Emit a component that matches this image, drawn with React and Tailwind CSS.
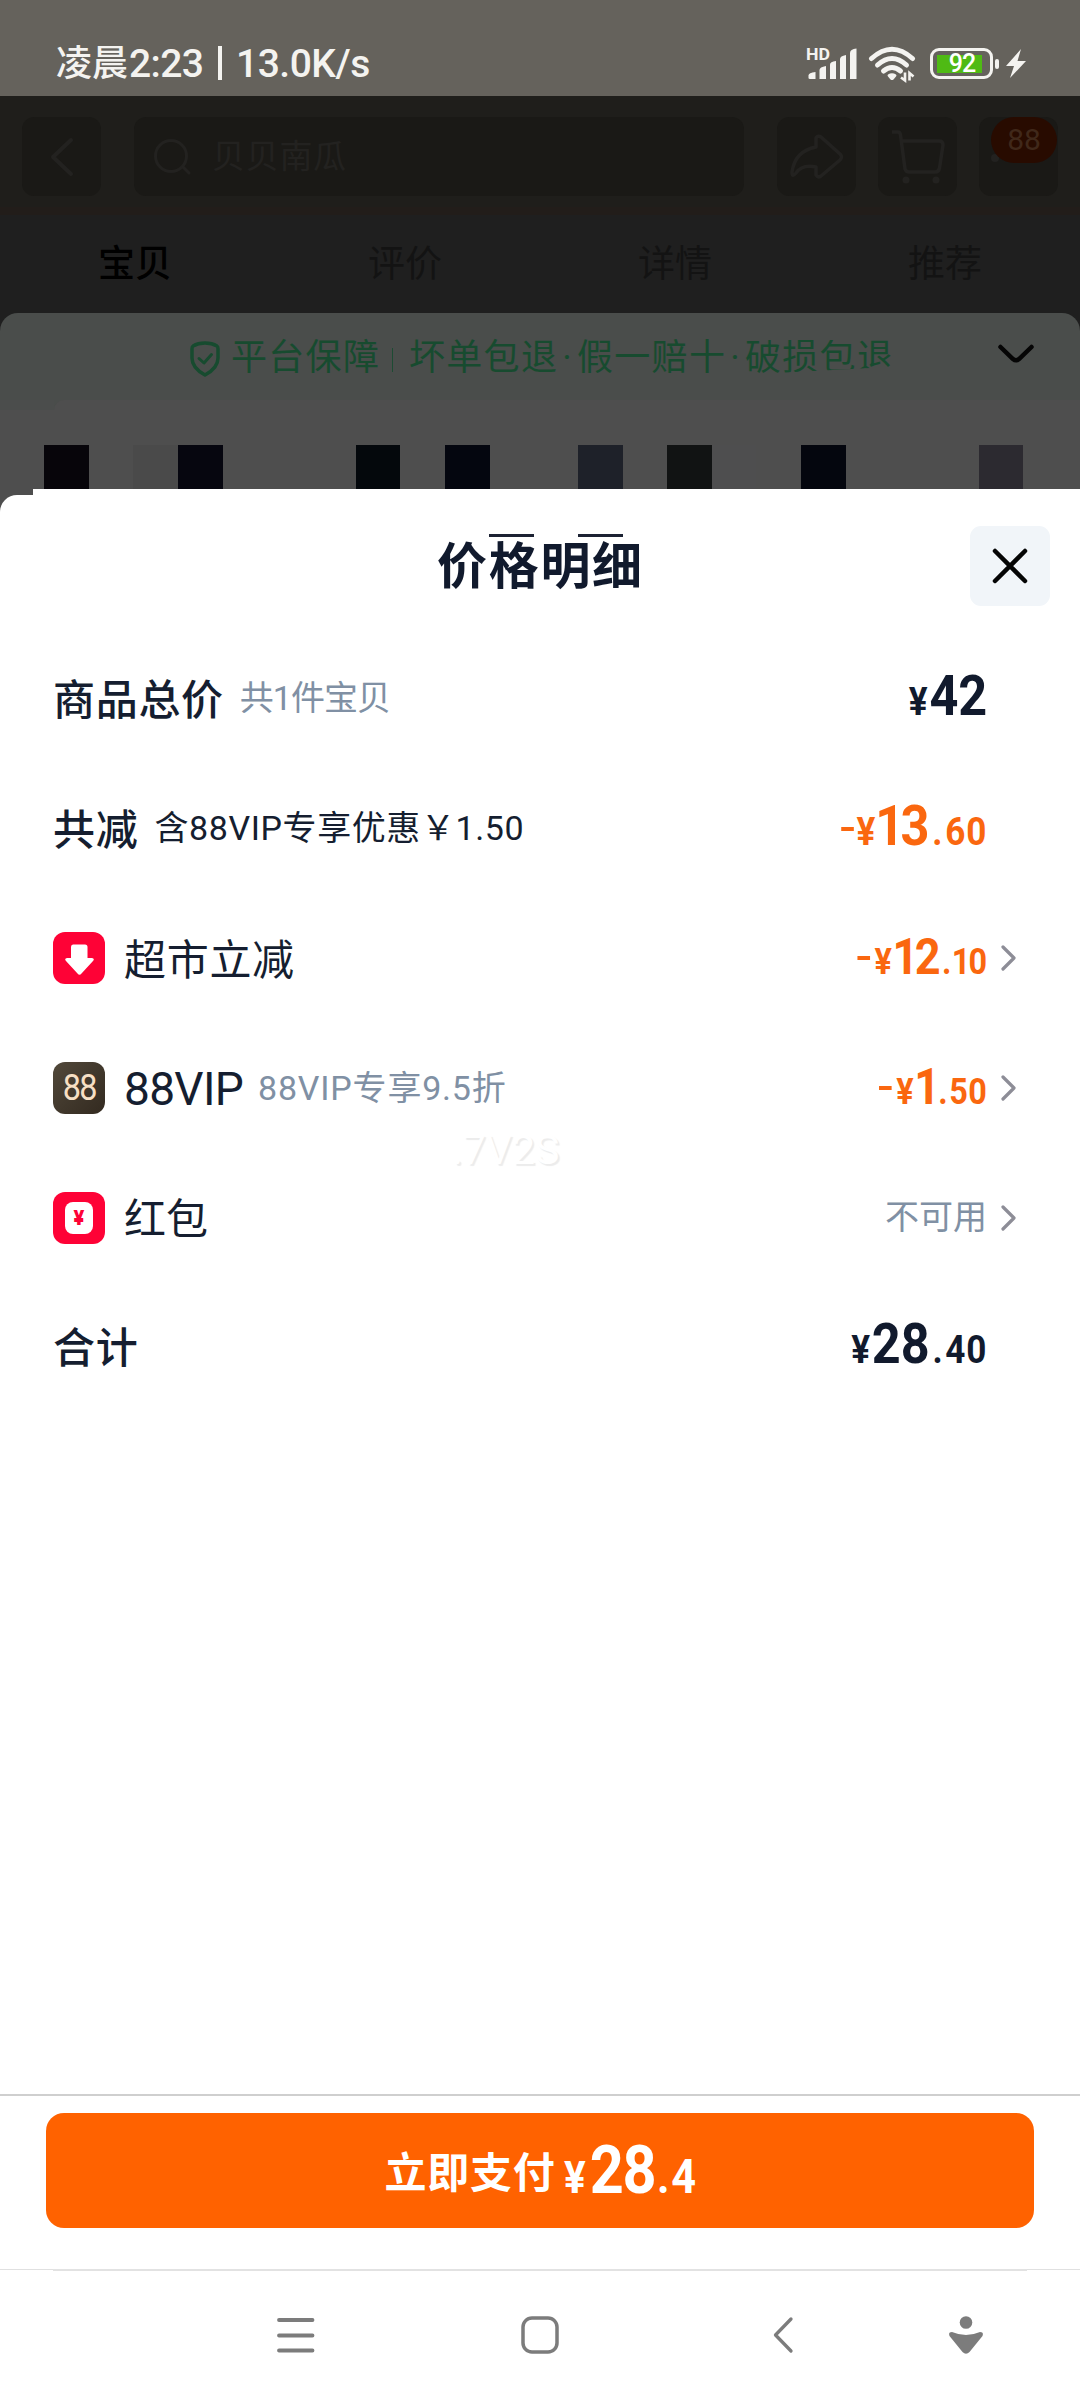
import clsx from 'clsx';

const PIXEL_BLOCKS = [
  { w: 'w-[44px]', color: '' },
  { w: 'w-[45px]', color: 'bg-[#07050a]' },
  { w: 'w-[44px]', color: '' },
  { w: 'w-[45px]', color: 'bg-[#4a4a4a]' },
  { w: 'w-[45px]', color: 'bg-[#06060f]' },
  { w: 'w-[133px]', color: '' },
  { w: 'w-[44px]', color: 'bg-[#04080c]' },
  { w: 'w-[45px]', color: '' },
  { w: 'w-[45px]', color: 'bg-[#04060f]' },
  { w: 'w-[88px]', color: '' },
  { w: 'w-[45px]', color: 'bg-[#1e2129]' },
  { w: 'w-[44px]', color: '' },
  { w: 'w-[45px]', color: 'bg-[#111313]' },
  { w: 'w-[44px]', color: 'bg-[#4e4e4f]' },
  { w: 'w-[45px]', color: '' },
  { w: 'w-[45px]', color: 'bg-[#04060e]' },
  { w: 'w-[133px]', color: '' },
  { w: 'w-[44px]', color: 'bg-[#2c2a30]' },
];

const tabs = ['宝贝', '评价', '详情', '推荐'];

const StatusBar = () => (
  <div className="flex h-24 items-start bg-[#65625c] pl-[56px] pt-[39px] text-[#f4f3f0]">
    <div className="flex h-12 w-[750px] items-center whitespace-nowrap pt-[2px] font-medium leading-none">
      <span className="w-[73px] text-[36px]">凌晨</span>
      <span className="w-[89px] text-[39px] tracking-[-0.6px]">2:23</span>
      <span className="mb-[3px] h-[34px] w-[4px] bg-[#f4f3f0]" />
      <span className="ml-[14px] text-[39px] tracking-[-0.5px]">13.0K/s</span>
    </div>
    <svg width="52" height="40" viewBox="0 0 52 40" className="mt-[5px]" fill="currentColor">
      <text x="0" y="15.500" fontSize="17" fontWeight="700" textLength="24" lengthAdjust="spacingAndGlyphs">HD</text>
      <path d="M2.500 34V31.500Q2.500 28.500 9.500 28V35H4Q2.500 35 2.500 34Z" />
      <path d="M13.500 26Q13.500 23 20 22V35H13.500Z" />
      <path d="M24 20.500Q24 17.500 30 17V35H24Z" />
      <path d="M34 15Q34 12 40 11V35H34Z" />
      <path d="M44 9Q44 5 50.500 4.500V35H44Z" />
    </svg>
    <svg width="50" height="40" viewBox="0 0 50 40" className="ml-[10px] mt-[5px]" fill="none" stroke="currentColor" strokeWidth="5">
      <path d="M3.500 14.500 Q24 -4 44.500 14.500" strokeLinecap="round" />
      <path d="M9.500 21 Q24 8 38.500 21" strokeLinecap="round" />
      <path d="M15.500 27 Q24 20 32.500 27" strokeLinecap="round" />
      <path d="M20 30.500 Q24 28 28 30.500 Q29 31.500 28 32.500 L25.500 35.500 Q24 36.500 22.500 35.500 L20 32.500 Q19 31.500 20 30.500Z" fill="currentColor" stroke="none" />
      <path d="M37 28.500V36.500L33 33.500M41.500 36.500V29L45.500 32.500" strokeWidth="2.600" />
    </svg>
    <div className="ml-[12px] mt-[9px] flex items-center">
      <div className="flex h-[31px] w-[63px] items-center rounded-[9px] border-[3px] border-[#f4f3f0] pl-[4px]">
        <div className="flex h-[18px] w-[45px] items-center justify-center bg-[#4fba14] pl-[5px] text-[25px] font-medium leading-none tracking-[-1px] text-white">92</div>
      </div>
      <div className="ml-[2px] h-[10px] w-[4px] rounded-[2px] bg-[#f4f3f0]" />
      <svg width="20" height="30" viewBox="0 0 20 30" className="ml-[7px]" fill="currentColor">
        <path d="M15 0 L0 17 H8 L4 29 L20 12 H11.500Z" />
      </svg>
    </div>
  </div>
);

const DimmedHeader = () => (
  <div className="bg-[#1f1e1b]">
    <div className="flex h-[111px] items-start pl-[22px] pt-[21px] text-[#232220]">
      <div className="flex h-[79px] w-[79px] items-center justify-center rounded-[12px] bg-[#1a1916]">
        <svg width="24" height="40" viewBox="0 0 24 40" fill="none" stroke="currentColor" strokeWidth="4" strokeLinecap="round" strokeLinejoin="round">
          <path d="M21 3 L3 20 L21 37" />
        </svg>
      </div>
      <div className="ml-[33px] flex h-[79px] w-[610px] items-center rounded-[12px] bg-[#1a1916] pl-[20px]">
        <svg width="38" height="38" viewBox="0 0 38 38" fill="none" stroke="currentColor" strokeWidth="3" strokeLinecap="round">
          <circle cx="17" cy="18" r="15.500" />
          <path d="M29 29 L35 35" />
        </svg>
        <span className="ml-[20px] text-[33px] leading-none tracking-[0.7px]">贝贝南瓜</span>
      </div>
      <div className="ml-[33px] flex h-[79px] w-[79px] items-center justify-center rounded-[12px] bg-[#1a1916]">
        <svg width="54" height="46" viewBox="0 0 54 46" fill="none" stroke="currentColor" strokeWidth="3.500" strokeLinejoin="round">
          <path d="M26 4 Q28 1 31 3 L50 20 Q53 23 50 26 L31 42 Q28 44 26 41 V33 Q12 30 6 39 Q2 44 2 38 Q5 17 26 13Z" />
        </svg>
      </div>
      <div className="ml-[22px] flex h-[79px] w-[79px] items-center justify-center rounded-[12px] bg-[#1a1916]">
        <svg width="54" height="54" viewBox="0 0 54 54" fill="none" stroke="currentColor" strokeWidth="3.500" strokeLinejoin="round">
          <path d="M1 2 H7 Q9 2 9.500 5 L14 39 Q15 42 18 42 H44 Q48 42 48.500 38 L52 15 Q52 11 48 11 H11" />
          <circle cx="15" cy="50" r="3.500" fill="currentColor" stroke="none" />
          <circle cx="45" cy="50" r="3.500" fill="currentColor" stroke="none" />
        </svg>
      </div>
      <div className="relative ml-[22px] h-[79px] w-[79px] rounded-[12px] bg-[#1a1916]">
        <span className="absolute left-[12px] top-[37px] h-[8px] w-[8px] rounded-full bg-[#232220]" />
        <div className="absolute left-[12px] top-0 flex h-[46px] w-[66px] items-center justify-center rounded-full bg-[#280b00] text-[30px] leading-none text-[#40281a]">88</div>
      </div>
    </div>
    <div className="h-[8px] bg-[#221d1a]" />
    <div className="flex h-[118px] bg-[#1f1f1f] pt-[31px]">
      {tabs.map((tab, i) => (
        <span
          key={tab}
          className={clsx('flex-1 text-center text-[37px] leading-[37px]', i === 0 ? 'font-medium text-black' : 'text-[#131313]')}
        >
          {tab}
        </span>
      ))}
    </div>
  </div>
);

const GuaranteeCard = () => (
  <div className="-mt-[20px] overflow-hidden rounded-t-[18px] bg-[#4a4d4b]">
    <div className="flex h-[87px] items-start whitespace-nowrap pl-[190px] pt-[27px] text-[36px] leading-[36px] tracking-[1.300px] text-[#174b2f]">
      <svg width="30" height="36" viewBox="0 0 30 36" className="mt-px" fill="none" stroke="currentColor" strokeWidth="3.500" strokeLinejoin="round" strokeLinecap="round">
        <path d="M15 2 Q22 2 27 5 Q28 5.500 28 8 V17 Q28 27 15 34 Q2 27 2 17 V8 Q2 5.500 3 5 Q8 2 15 2Z" />
        <path d="M9 17.500 L14 22 L21.500 13.500" strokeWidth="3" />
      </svg>
      <span className="ml-[11px] w-[161px]">平台保障</span>
      <span className="mt-[8px] h-[24px] w-px bg-[#1d4b33]" />
      <span className="ml-[16px] w-[149px]">坏单包退</span>
      <span className="w-[19px] text-center">·</span>
      <span className="w-[149px]">假一赔十</span>
      <span className="w-[19px] text-center">·</span>
      <span className="w-[149px] [clip-path:polygon(0_0,100%_0,100%_74%,0_96%)]">破损包退</span>
      <svg width="36" height="20" viewBox="0 0 36 20" className="ml-[104px] mt-[4px] text-[#050505]" fill="none" stroke="currentColor" strokeWidth="4.500" strokeLinecap="round">
        <path d="M2.500 3 L15 15 Q18 17.500 21 15 L33.500 3" />
      </svg>
    </div>
    <div className="flex">
      <div className="h-[10px] w-[54px] bg-[#4b4d4c]" />
      <div className="h-[10px] flex-1 rounded-tl-[10px] bg-[#4e4e4e]" />
    </div>
    <div className="bg-[#4e4e4e] pt-[35px]">
      <div className="flex h-[44px]">
        {PIXEL_BLOCKS.map((block, i) => (
          <span key={i} className={clsx('h-full shrink-0', block.w, block.color)} />
        ))}
      </div>
    </div>
  </div>
);

// the figure 1 is set tighter than the other digits
const Digits = ({ value, className }) => (
  <span className={className}>
    {value.split('').map((d, i) => (
      <span key={i} className={clsx(d === '1' && '-ml-[0.04em] -mr-[0.07em]')}>{d}</span>
    ))}
  </span>
);

const Price = ({ minus, whole, cents, size = 'lg', orange }) => {
  const lg = size === 'lg';
  return (
    <span
      className={clsx(
        'flex origin-right scale-x-90 items-baseline whitespace-nowrap font-bold leading-none',
        lg ? 'mb-[5px]' : 'mb-[3px]',
        orange ? 'text-[#fa670f]' : 'text-[#111a2d]'
      )}
    >
      {minus && <span className={clsx('h-[4px] w-[14px] self-center bg-[#fa670f]', lg ? 'mr-[3px] mt-[6px]' : 'mr-[5px] mt-[3px]')} />}
      <span className={lg ? 'w-[23px] text-[39px]' : 'w-[22px] text-[36px]'}>¥</span>
      <Digits value={whole} className={lg ? 'text-[56px]' : 'text-[50px] tracking-[-0.5px]'} />
      {cents && (
        <>
          <span className={lg ? 'mx-[3px] text-[39px]' : 'mx-[2px] text-[36px]'}>.</span>
          <Digits value={cents} className={lg ? 'text-[39px] tracking-[1px]' : 'text-[36px] tracking-[0.4px]'} />
        </>
      )}
    </span>
  );
};

const Chevron = () => (
  <svg width="15" height="26" viewBox="0 0 15 26" fill="none" stroke="#8d8d97" strokeWidth="3.200" strokeLinecap="round" strokeLinejoin="round">
    <path d="M2 2 L13 13 L2 24" />
  </svg>
);

const Row = ({ icon, label, labelClass = 'pt-[5px] text-[42px] tracking-[0.7px]', height = 'h-[130px]', bold, note, noteClass, arrow, children }) => (
  <div className={clsx('flex items-center pl-[53px] pr-[64px] text-[#151e30]', height)}>
    {icon && <span className="mr-[19px] flex h-[52px] w-[52px] shrink-0 items-center justify-center">{icon}</span>}
    <span className={clsx('whitespace-nowrap leading-[60px]', labelClass, bold && 'font-medium')}>{label}</span>
    {note && <span className={clsx('whitespace-nowrap text-[34px] leading-[50px]', noteClass)}>{note}</span>}
    <span className="ml-auto">{children}</span>
    <span className="ml-[13px] flex w-[16px] items-center justify-end">{arrow && <Chevron />}</span>
  </div>
);

const DownIcon = () => (
  <svg width="52" height="52" viewBox="0 0 52 52">
    <rect width="52" height="52" rx="12" fill="#fe0236" />
    <path d="M20 12.500 H32 Q34.500 12.500 34.500 15 V26 H39 Q42 26.500 40 29 L28.500 41.500 Q26.500 44 24.500 41.500 L13 29 Q11 26.500 14 26 H18 V15 Q18 12.500 20 12.500Z" fill="#fff" />
  </svg>
);

const VipIcon = () => (
  <div className="flex h-[52px] w-[52px] items-center justify-center rounded-[12px] bg-linear-to-br from-[#51483a] to-[#332a20]">
    <span className="scale-x-90 text-[36px] leading-none tracking-[-2px] text-[#f6dfc4]">88</span>
  </div>
);

const RedPacketIcon = () => (
  <div className="flex h-[52px] w-[52px] items-center justify-center rounded-[12px] bg-[#fe0236]">
    <div className="flex h-[32px] w-[28px] items-center justify-center rounded-[8px] bg-white text-[20px] font-black leading-none text-[#fe0236]">¥</div>
  </div>
);

const NavBar = () => (
  <div className="flex h-[129px] items-start pl-[277px] pt-[45px] text-[#7c7c7c]">
    <svg width="38" height="38" viewBox="0 0 38 38" fill="none" stroke="currentColor" strokeWidth="3.800" strokeLinecap="round">
      <path d="M2 4 H35.500 M2 19.500 H35.500 M2 34.500 H35.500" />
    </svg>
    <svg width="38" height="38" viewBox="0 0 38 38" className="ml-[206px]" fill="none" stroke="currentColor" strokeWidth="3.500">
      <rect x="2" y="2" width="34" height="34" rx="9" />
    </svg>
    <svg width="22" height="38" viewBox="0 0 22 38" className="ml-[214px]" fill="none" stroke="currentColor" strokeWidth="3.300" strokeLinecap="round" strokeLinejoin="round">
      <path d="M18 3 L2.500 19 L18 35" />
    </svg>
    <svg width="34" height="38" viewBox="0 0 34 38" className="ml-[154px]" fill="currentColor">
      <circle cx="17" cy="6.500" r="6.300" />
      <path d="M3 16 Q17 22 31 16 Q35 16 33.500 20 L20.500 36 Q17 39.500 13.500 36 L0.500 20 Q-1 16 3 16Z" />
    </svg>
  </div>
);

export default function App() {
  return (
    <div className="flex h-[2400px] w-[1080px] flex-col overflow-hidden bg-[#4e4e4e] font-[Roboto,'Noto_Sans_CJK_SC',sans-serif]">
      <StatusBar />
      <DimmedHeader />
      <GuaranteeCard />

      <div className="ml-[33px] h-[6px] shrink-0 bg-white" />
      <div className="flex flex-1 flex-col rounded-tl-[17px] bg-white">
        <div className="flex h-[138px] items-start pl-[437px] pt-[31px]">
          <div className="relative w-[203px] pt-[3px]">
            <h1 className="whitespace-nowrap text-[50px] font-bold leading-[76px] tracking-[1.700px] text-[#111a2d]">价格明细</h1>
            <span className="absolute left-[52px] top-[8px] h-[3px] w-[45px] bg-[#1c2233]" />
            <span className="absolute left-[141px] top-[8px] h-[3px] w-[45px] bg-[#1c2233]" />
          </div>
          <button className="ml-[330px] flex h-[80px] w-[80px] items-center justify-center rounded-[11px] bg-[#f1f5f9]">
            <svg width="36" height="36" viewBox="0 0 36 36" fill="none" stroke="#050505" strokeWidth="4.500" strokeLinecap="round">
              <path d="M3 3 L33 33 M33 3 L3 33" />
            </svg>
          </button>
        </div>

        <Row label="商品总价" bold note="共1件宝贝" noteClass="ml-[16px] text-[#8090a4] tracking-[-1px]">
          <Price whole="42" />
        </Row>
        <Row label="共减" bold note="含88VIP专享优惠￥1.50" noteClass="ml-[16px] tracking-[0.6px]">
          <Price minus whole="13" cents="60" orange />
        </Row>
        <Row icon={<DownIcon />} label="超市立减" arrow>
          <Price minus whole="12" cents="10" size="sm" orange />
        </Row>
        <div className="relative">
          <Row
            icon={<VipIcon />}
            label="88VIP"
            labelClass="pt-[2px] text-[46px] tracking-[-0.7px]"
            note="88VIP专享9.5折"
            noteClass="ml-[15px] text-[#8090a4] tracking-[0.8px]"
            arrow
          >
            <Price minus whole="1" cents="50" size="sm" orange />
          </Row>
          <span className="absolute left-[452px] top-[107px] text-[41px] leading-[41px] text-white [text-shadow:2px_2px_1px_#ececec]">.7V2S</span>
        </div>
        <Row icon={<RedPacketIcon />} label="红包" labelClass="pt-[4px] text-[42px]" height="h-[129px]" arrow>
          <span className="text-[34px] text-[#8090a4]">不可用</span>
        </Row>
        <Row label="合计" bold height="h-[129px]">
          <Price whole="28" cents="40" />
        </Row>

        <div className="mt-auto border-t-2 border-[#cfcfcf] px-[46px] pb-[41px] pt-[17px]">
          <button className="flex h-[115px] w-full items-baseline whitespace-nowrap rounded-[18px] bg-[#ff6200] pl-[334px] font-bold leading-[115px] text-white">
            <span className="w-[180px] -translate-y-[5px] text-[42px] tracking-[0.7px]">立即支付</span>
            <span className="flex origin-left scale-x-90 items-baseline">
              <span className="w-[33px] text-[45px]">¥</span>
              <span className="text-[66px] tracking-[-1.500px]">28</span>
              <span className="ml-[2px] text-[48px] tracking-[2px]">.4</span>
            </span>
          </button>
        </div>
        <div className="flex h-[2px] items-start">
          <span className="h-px w-[53px] bg-[#e0e0e0]" />
          <span className="h-[2px] flex-1 bg-[#e2e2e2]" />
          <span className="h-px w-[53px] bg-[#e0e0e0]" />
        </div>
        <NavBar />
      </div>
    </div>
  );
}
